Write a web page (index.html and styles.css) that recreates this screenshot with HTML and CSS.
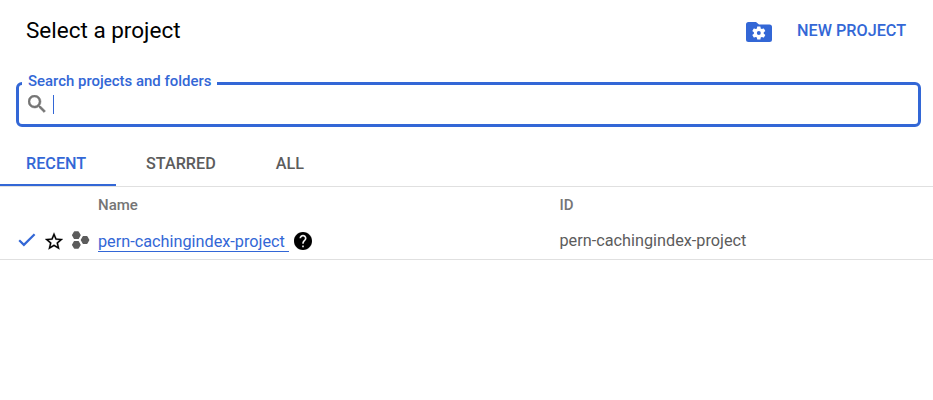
FILE: index.html
```html
<!DOCTYPE html>
<html lang="en">
<head>
<meta charset="utf-8">
<title>Select a project</title>
<link rel="stylesheet" href="styles.css">
</head>
<body>
<header class="header">
  <h1 class="title">Select a project</h1>
  <svg class="folder" width="26" height="20" viewBox="0 0 26 20" aria-hidden="true">
    <path fill="#3367d6" d="M2.500 0H10l3 2.400h10.500A2.500 2.500 0 0 1 26 4.900v12.600a2.500 2.500 0 0 1-2.500 2.500h-21A2.500 2.500 0 0 1 0 17.500v-15A2.500 2.500 0 0 1 2.500 0z"/>
    <path transform="translate(4.900 3.100) scale(.66)" fill="#fff" d="M19.430 12.980c.04-.32.07-.64.07-.98s-.03-.66-.07-.98l2.110-1.650c.19-.15.24-.42.12-.64l-2-3.460c-.12-.22-.39-.3-.61-.22l-2.490 1c-.52-.4-1.080-.73-1.690-.98l-.38-2.650A.488.488 0 0 0 14 2h-4c-.25 0-.46.18-.49.42l-.38 2.650c-.61.25-1.170.59-1.690.98l-2.490-1c-.23-.09-.49 0-.61.22l-2 3.460c-.13.22-.07.49.12.64l2.110 1.650c-.04.32-.07.65-.07.98s.03.66.07.98l-2.110 1.650c-.19.15-.24.42-.12.64l2 3.460c.12.22.39.3.61.22l2.490-1c.52.4 1.080.73 1.690.98l.38 2.650c.03.24.24.42.49.42h4c.25 0 .46-.18.49-.42l.38-2.650c.61-.25 1.170-.59 1.690-.98l2.490 1c.23.09.49 0 .61-.22l2-3.460c.12-.22.07-.49-.12-.64l-2.110-1.650zM12 15a3 3 0 1 1 0-6 3 3 0 0 1 0 6z"/>
  </svg>
  <a class="new-project">NEW PROJECT</a>
</header>

<div class="search">
  <span class="search-label">Search projects and folders</span>
  <svg class="search-icon" width="18" height="18" viewBox="3 3 18 18" aria-hidden="true">
    <path fill="#757575" stroke="#757575" stroke-width=".5" d="M15.500 14h-.79l-.28-.27A6.471 6.471 0 0 0 16 9.500 6.500 6.500 0 1 0 9.500 16c1.610 0 3.090-.59 4.230-1.570l.27.28v.79l5 4.990L20.490 19l-4.990-5zm-6 0C7.010 14 5 11.990 5 9.500S7.010 5 9.500 5 14 7.010 14 9.500 11.990 14 9.500 14z"/>
  </svg>
  <span class="caret"></span>
</div>

<nav class="tabs">
  <a class="tab tab-active">RECENT</a>
  <a class="tab">STARRED</a>
  <a class="tab">ALL</a>
</nav>

<div class="row row-head">
  <span class="col-name">Name</span>
  <span class="col-id">ID</span>
</div>
<div class="row row-item">
  <div class="icons">
    <svg class="check" width="18" height="14" viewBox="0 0 18 14" aria-hidden="true"><path d="M1.200 7.200l4.700 4.700L16.600 1.200" fill="none" stroke="#3367d6" stroke-width="2.200"/></svg>
    <svg class="star" width="18" height="18" viewBox="2 2 20 19" aria-hidden="true"><path fill="#000" stroke="#000" stroke-width=".2" d="M22 9.240l-7.190-.62L12 2 9.190 8.630 2 9.240l5.460 4.730L5.820 21 12 17.270 18.180 21l-1.630-7.030L22 9.240zM12 15.400l-3.760 2.270 1-4.280-3.320-2.880 4.380-.38L12 6.100l1.710 4.040 4.380.38-3.320 2.880 1 4.280L12 15.400z"/></svg>
    <svg class="hexes" width="18" height="18" viewBox="0 0 18 18" fill="#5c5c5c" stroke="#5c5c5c" stroke-width="1.400" stroke-linejoin="round" aria-hidden="true">
      <path id="hex" d="M2.500 1h3.700l1.800 3.200-1.800 3.200H2.500L.7 4.200z"/>
      <use href="#hex" y="9.600"/>
      <use href="#hex" x="8.700" y="4.800"/>
    </svg>
  </div>
  <div class="col-name"><a class="link">pern-cachingindex-project</a>
    <svg class="help" width="18" height="18" viewBox="2 2 20 20" aria-hidden="true"><path d="M12 2C6.480 2 2 6.480 2 12s4.480 10 10 10 10-4.480 10-10S17.520 2 12 2zm1 17h-2v-2h2v2zm2.070-7.750l-.9.920C13.450 12.900 13 13.500 13 15h-2v-.5c0-1.100.45-2.100 1.170-2.830l1.240-1.260c.37-.36.59-.86.59-1.410 0-1.100-.9-2-2-2s-2 .9-2 2H8c0-2.210 1.790-4 4-4s4 1.790 4 4c0 .88-.36 1.680-.93 2.250z" stroke="#000" stroke-width=".2"/></svg>
  </div>
  <span class="col-id">pern-cachingindex-project</span>
</div>
</body>
</html>
```
FILE: styles.css
```css
* { box-sizing: border-box; }
body {
  margin: 0;
  background: #fff;
  color: #5c5c5c;
  font: 16.250px/20px Roboto, sans-serif;
}
svg { display: block; flex: none; }
.header {
  display: flex;
  align-items: center;
  height: 60px;
  padding: 2px 27px 0 26px;
}
.title {
  flex: 1;
  margin: -2px 0 0;
  color: #000;
  font-size: 22.500px;
  font-weight: 400;
}
.folder { margin: 2px 25px 0 0; }
.new-project {
  color: #3367d6;
  font-size: 16.200px;
  font-weight: 500;
}
.search {
  position: relative;
  display: flex;
  align-items: center;
  height: 45px;
  margin: 22px 12px 0 16px;
  padding-left: 9px;
  border: 3px solid #3367d6;
  border-radius: 6px;
}
.search-label {
  position: absolute;
  top: -14px;
  left: 3px;
  padding: 0 6px;
  background: #fff;
  color: #3367d6;
  font-size: 14.940px;
  font-weight: 500;
}
.search-icon { margin-top: -1px; }
.caret {
  width: 1px;
  height: 19px;
  margin-left: 7px;
  background: #3367d6;
}
.tabs {
  display: flex;
  height: 60px;
  border-bottom: 1px solid #e0e0e0;
}
.tab {
  padding: 27px 30px 0;
  color: #5c5c5c;
  font-size: 16.200px;
  font-weight: 500;
}
.tab-active {
  width: 116px;
  padding-left: 26px;
  border-bottom: 2px solid #3367d6;
  color: #3367d6;
}
.row {
  display: grid;
  grid-template-columns: 98px 461.500px 1fr;
  align-items: center;
}
.row .col-name { grid-column: 2; }
.row-head {
  height: 36px;
  color: #757575;
  font-size: 15px;
  font-weight: 500;
}
.row-item {
  height: 37px;
  border-bottom: 1px solid #e0e0e0;
}
.icons {
  display: flex;
  align-items: center;
  padding-left: 18px;
}
.check { margin-top: -2px; }
.star { margin-left: 9px; }
.hexes {
  margin: -2px 0 0 8.500px;
}
.row-item .col-name {
  display: flex;
  align-items: center;
}
.link {
  width: 191px;
  height: 21px;
  padding-top: 1px;
  border-bottom: 1px solid #3367d6;
  color: #3367d6;
}
.help { margin-left: 5.400px; }
```
